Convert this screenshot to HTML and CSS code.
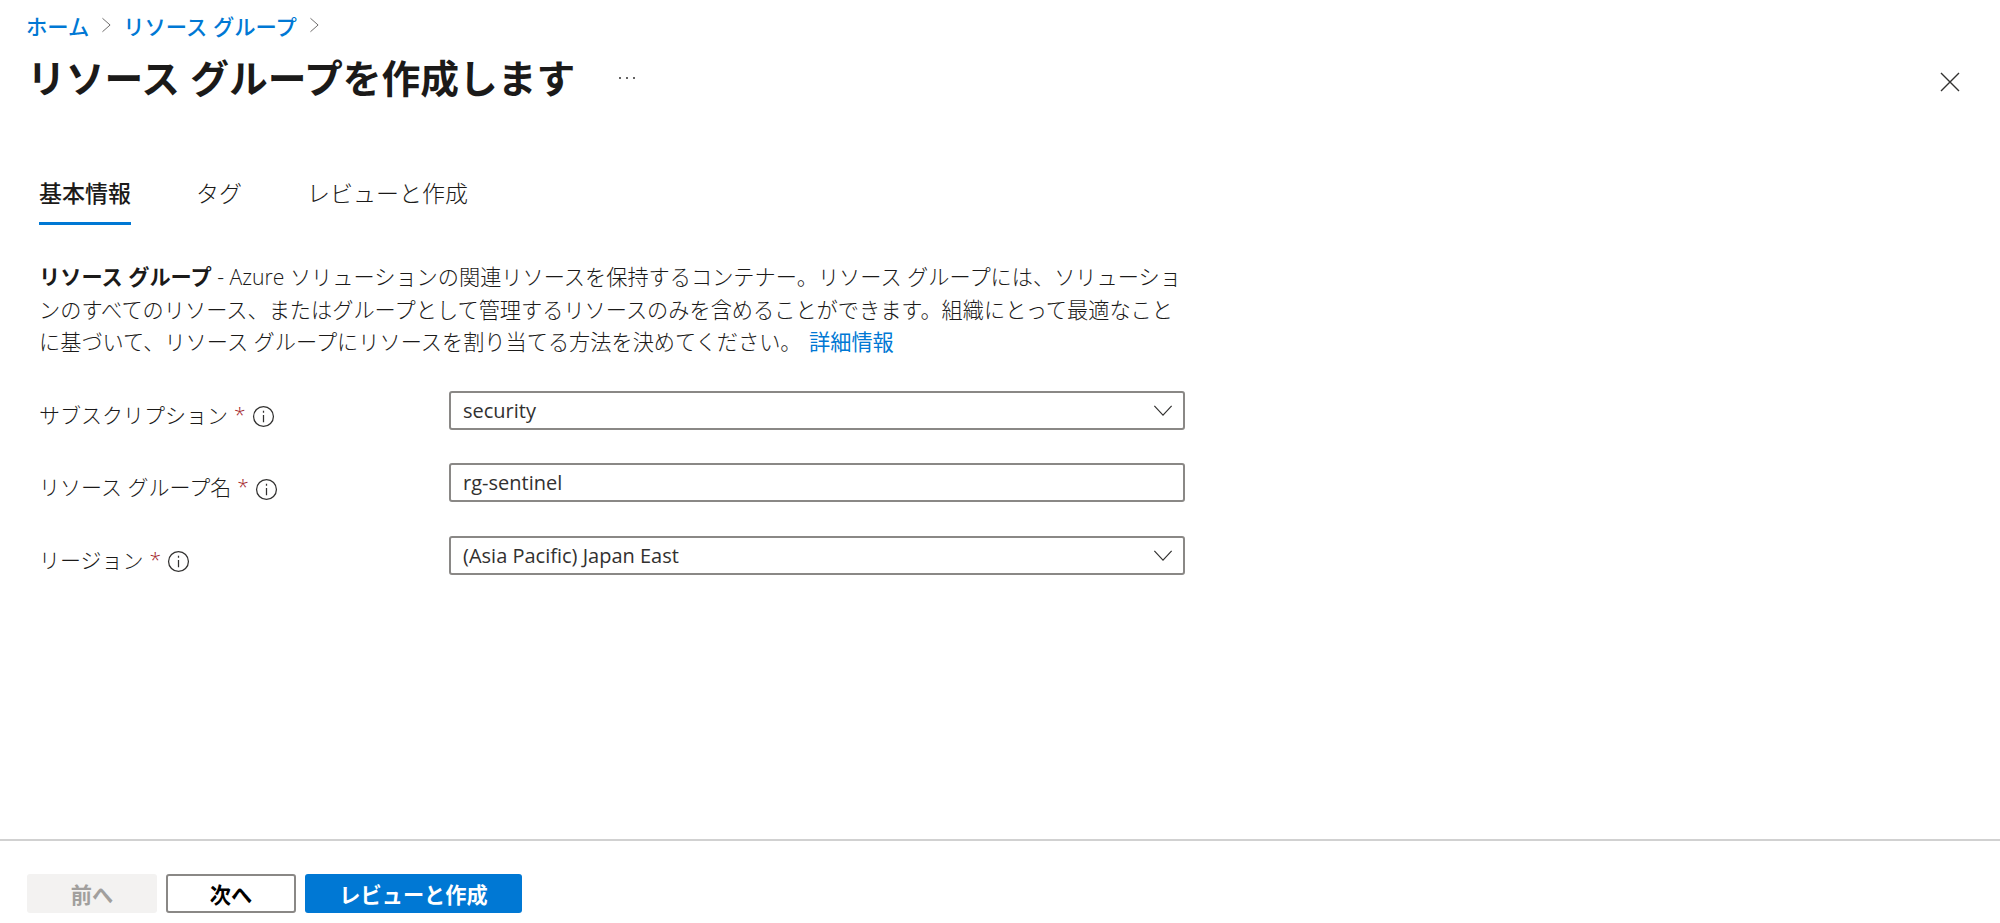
FILE: index.html
```html
<!DOCTYPE html>
<html lang="ja">
<head>
<meta charset="utf-8">
<title>リソース グループを作成します</title>
<link rel="stylesheet" href="styles.css">
</head>
<body>
<div class="page">
  <header class="head">
    <nav class="crumbs">
      <a class="link">ホーム</a>
      <svg class="crumb-sep" viewBox="0 0 12 20"><path d="M1.5 2.5 10 10l-8.500 7.500"/></svg>
      <a class="link">リソース グループ</a>
      <svg class="crumb-sep" viewBox="0 0 12 20"><path d="M1.500 2.500 10 10l-8.500 7.500"/></svg>
    </nav>
    <div class="title-row">
      <h1 class="title">リソース グループを作成します</h1>
      <span class="more">
        <i class="dot"></i><i class="dot"></i><i class="dot"></i>
      </span>
      <svg class="close" viewBox="0 0 20 20"><path d="M1 1l18 18M19 1 1 19"/></svg>
    </div>
  </header>
  <main class="main">
    <div class="tabs">
      <span class="tab tab-active">基本情報</span>
      <span class="tab">タグ</span>
      <span class="tab">レビューと作成</span>
    </div>
    <p class="intro"><b class="intro-b">リソース グループ</b> - Azure ソリューションの関連リソースを保持するコンテナー。リソース グループには、ソリューションのすべてのリソース、またはグループとして管理するリソースのみを含めることができます。組織にとって最適なことに基づいて、リソース グループにリソースを割り当てる方法を決めてください。 <a class="more-link">詳細情報</a></p>
    <div class="form">
      <div class="row">
        <div class="label">サブスクリプション <span class="req">*</span>
          <svg class="info" viewBox="0 0 22 22"><circle cx="11" cy="11" r="9.500"/><path d="M11 9.500v7M11 5.500v2"/></svg>
        </div>
        <div class="field"><span>security</span>
          <svg class="chev" viewBox="0 0 22 14"><path d="M1.500 2 11 12l9.500-10"/></svg>
        </div>
      </div>
      <div class="row">
        <div class="label">リソース グループ名 <span class="req">*</span>
          <svg class="info" viewBox="0 0 22 22"><circle cx="11" cy="11" r="9.500"/><path d="M11 9.500v7M11 5.500v2"/></svg>
        </div>
        <div class="field"><span>rg-sentinel</span></div>
      </div>
      <div class="row">
        <div class="label">リージョン <span class="req">*</span>
          <svg class="info" viewBox="0 0 22 22"><circle cx="11" cy="11" r="9.500"/><path d="M11 9.500v7M11 5.500v2"/></svg>
        </div>
        <div class="field"><span>(Asia Pacific) Japan East</span>
          <svg class="chev" viewBox="0 0 22 14"><path d="M1.500 2 11 12l9.500-10"/></svg>
        </div>
      </div>
    </div>
  </main>
  <footer class="foot">
    <button class="btn btn-off">前へ</button>
    <button class="btn btn-sec">次へ</button>
    <button class="btn btn-pri">レビューと作成</button>
  </footer>
</div>
</body>
</html>
```
FILE: styles.css
```css
* { box-sizing: border-box; }
html, body { margin: 0; height: 100%; background: #fff; }
body {
  font-family: "Open Sans", "Noto Sans CJK JP", sans-serif;
  font-size: 20px;
  color: #323130;
}
.page { height: 923px; display: flex; flex-direction: column; overflow: hidden; }

.head { padding: 10px 40px 0 26px; }
.crumbs { display: flex; align-items: center; height: 30px; font-size: 21.300px; font-weight: 500; }
.link { color: #0078d4; }
.crumb-sep { width: 11px; height: 18px; margin: 0 11px 0 12px; fill: none; stroke: #605e5c; stroke-width: 1; }
.title-row { display: flex; align-items: center; height: 66px; margin-top: 5px; padding-left: 1px; }
.title { margin: 0; font-size: 38.750px; font-weight: 700; color: #1b1a19; line-height: 66px; }
.more { display: flex; gap: 5px; margin-left: 44px; }
.dot { width: 2px; height: 2px; background: #323130; border-radius: 50%; }
.close { width: 20px; height: 20px; margin-left: auto; margin-top: 8px; fill: none; stroke: #323130; stroke-width: 1.400; }

.main { flex: 1; padding: 60px 0 0 39px; }
.tabs { display: flex; gap: 65px; height: 54px; font-size: 23px; }
.tab { height: 54px; line-height: 44px; color: #1b1a19; font-weight: 300; }
.tab-active { font-weight: 500; color: #1b1a19; border-bottom: 3px solid #0078d4; }
.intro { width: 1150px; margin: 36px 0 0; font-size: 21.200px; line-height: 32.500px; color: #1b1a19; font-weight: 300; }
.intro-b { font-weight: 700; color: #1b1a19; }
.more-link { color: #0078d4; font-weight: 400; margin-left: 2px; }

.form { margin-top: 32px; display: flex; flex-direction: column; gap: 33.500px; }
.row { display: flex; align-items: center; height: 39px; }
.label { width: 410px; display: flex; align-items: center; gap: 6px; padding-top: 7px; font-size: 21px; font-weight: 300; color: #1b1a19; white-space: nowrap; }
.req { color: #a4262c; }
.info { width: 23px; height: 23px; margin-top: 6px; fill: none; stroke: #323130; stroke-width: 1.200; }
.field {
  width: 736px; height: 39px; padding: 0 10px 0 12px;
  display: flex; align-items: center; justify-content: space-between;
  border: 2px solid #8a8886; border-radius: 3px; font-size: 20px; color: #323130;
}
.chev { width: 20px; height: 13px; fill: none; stroke: #323130; stroke-width: 1.300; }

.foot {
  height: 84px; border-top: 2px solid #d1d1d1;
  padding: 33px 0 0 27px; display: flex; gap: 9px; align-items: flex-start;
}
.btn {
  height: 39px; width: 130px; border-radius: 3px; font: inherit; font-size: 21.200px; font-weight: 700; padding: 0;
}
.btn-off { background: #f3f2f1; border: 0; color: #a19f9d; }
.btn-sec { background: #fff; border: 2px solid #8a8886; color: #000; }
.btn-pri { width: 217px; background: #0078d4; border: 0; color: #fff; }
```
